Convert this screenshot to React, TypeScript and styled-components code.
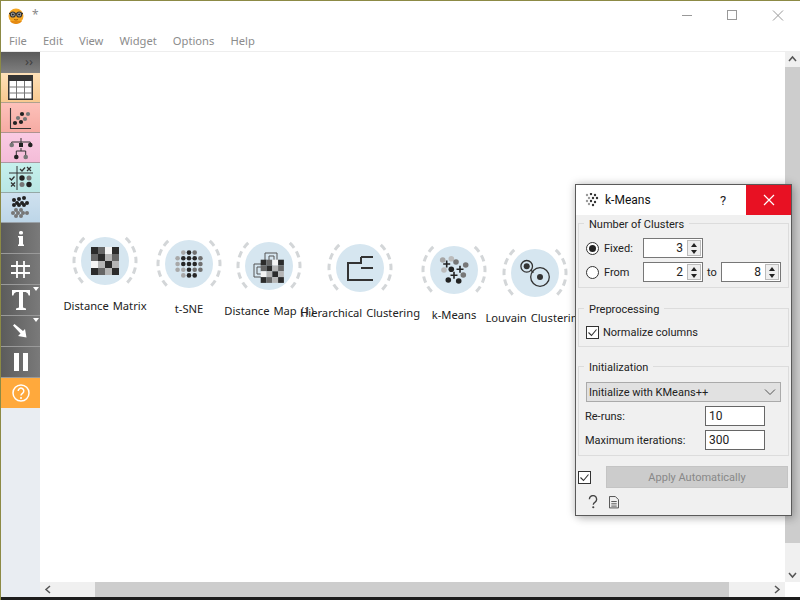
import React from "react";
import styled, { createGlobalStyle } from "styled-components";

const Global = createGlobalStyle`
  html, body { margin: 0; padding: 0; width: 800px; height: 600px; overflow: hidden; background: #fff; }
  * { box-sizing: border-box; }
  body { font-family: "Noto Sans", "Liberation Sans", sans-serif; font-size: 12px; }
`;

const Win = styled.div`
  position: relative; width: 800px; height: 600px; display: flex; flex-direction: column;
  background: #fff; border-top: 1px solid #8c8a45; border-left: 1px solid #8c8a45; overflow: hidden;
`;
const TitleBar = styled.div`
  height: 29px; flex: none; display: flex; align-items: center; padding-left: 7px; position: relative;
`;
const TitleStar = styled.span`
  margin-left: 8px; margin-top: -3px; color: #8a8a8a; font-size: 12px;
`;
const WinControls = styled.div`
  margin-left: auto; display: flex; align-items: center; height: 100%;
`;
const WinBtn = styled.svg`
  width: 45px; height: 29px; display: block; color: #999;
`;
const MenuBar = styled.div`
  height: 22px; flex: none; display: flex; align-items: center; gap: 16px; padding: 0 0 1px 8px;
  color: #8c8c8c; font-size: 11.2px; border-bottom: 1px solid #eeeeee;
`;
const Main = styled.div`
  height: 545px; flex: none; display: flex;
`;
const Dock = styled.div`
  width: 39px; flex: none; display: flex; flex-direction: column; background: #e9edf2;
  box-shadow: 1px 0 1px rgba(0,0,0,.12);
`;
const DockHead = styled.div`
  height: 21px; flex: none; background: linear-gradient(#5a5a5a, #808080); color: #404040;
  font-size: 13px; display: flex; align-items: center; justify-content: flex-end; padding: 0 7px 3px 0; letter-spacing: 0;
`;
const CatTile = styled.div<{ $c: string; $d: string }>`
  height: 30px; flex: none; display: flex; align-items: center; justify-content: center;
  background: linear-gradient(${p => p.$c}, ${p => p.$d}); border-bottom: 1px solid rgba(110,110,110,.55);
`;
const ToolTile = styled.div`
  position: relative; height: 31px; flex: none; display: flex; align-items: center; justify-content: center;
  background: linear-gradient(90deg, #5c5c5c, #7a7a7a); border-bottom: 1px solid #9a9a9a;
`;
const HelpTile = styled.div`
  height: 30px; flex: none; display: flex; align-items: center; justify-content: center; background: #ffa93c;
`;
const Caret = styled.span`
  position: absolute; right: 1px; top: 2px; width: 0; height: 0;
  border-left: 3px solid transparent; border-right: 3px solid transparent; border-top: 4px solid #fff;
`;
const CanvasCol = styled.div`
  flex: 1; min-width: 0; display: flex; flex-direction: column;
`;
const Canvas = styled.div`
  flex: 1; position: relative; background: #fff; overflow: hidden;
`;
const HScroll = styled.div`
  height: 15px; flex: none; display: flex; align-items: center; background: #f0f0f0;
`;
const HThumb = styled.div`
  width: 634px; height: 15px; background: #cdcdcd; margin-left: 39px;
`;
const ArrowBox = styled.svg`
  width: 16px; height: 15px; flex: none; color: #555;
`;
const ArrowPush = styled.div`
  flex: 1;
`;
const VScroll = styled.div`
  width: 15px; flex: none; display: flex; flex-direction: column; background: #f0f0f0;
`;
const VThumb = styled.div`
  height: 476px; background: #cdcdcd;
`;
const VPush = styled.div`
  flex: 1;
`;
const VArrow = styled.svg`
  width: 15px; height: 15px; flex: none; color: #555;
`;
const Corner = styled.div`
  height: 15px; flex: none; background: #fff;
`;
const Desk = styled.div`
  flex: 1; background: #1d1d1d;
`;

const NodeWrap = styled.div<{ $x: number; $y: number }>`
  position: absolute; left: ${p => p.$x - 40 - 100}px; top: ${p => p.$y - 52 - 36}px; width: 200px;
  display: flex; flex-direction: column; align-items: center;
`;
const NodeIcon = styled.svg`
  width: 72px; height: 72px; display: block;
`;
const NodeLabel = styled.div`
  margin-top: 1px; font-size: 11.2px; line-height: 16px; color: #222; white-space: nowrap; word-spacing: 1px;
`;

const Dialog = styled.div`
  position: absolute; left: 574px; top: 183px; width: 217px; height: 332px; background: #f0f0f0;
  border: 1px solid #5a5a5a; box-shadow: 0 0 8px rgba(0,0,0,.25), 4px 4px 8px rgba(0,0,0,.12);
  display: flex; flex-direction: column; color: #222; font-family: Roboto, "Noto Sans", sans-serif; font-size: 11px;
`;
const DlgTitle = styled.div`
  height: 30px; flex: none; background: #fff; display: flex; align-items: center; padding-left: 9px; color: #111;
`;
const DlgName = styled.span`
  margin-left: 6px; font-size: 12px; flex: 1;
`;
const DlgHelp = styled.span`
  width: 26px; font-size: 13px; text-align: left; color: #222;
`;
const DlgClose = styled.div`
  width: 45px; height: 30px; background: #e81123; display: flex; align-items: center; justify-content: center;
`;
const DlgBody = styled.div`
  flex: 1; display: flex; flex-direction: column; padding: 8px 2px 0 2px;
`;
const Group = styled.div<{ $h: number; $mb: number }>`
  position: relative; height: ${p => p.$h}px; margin-bottom: ${p => p.$mb}px; border: 1px solid #dcdcdc;
  padding: 0 7px; display: flex; flex-direction: column;
`;
const GroupTitle = styled.span`
  position: absolute; left: 5px; top: -7px; padding: 0 5px; line-height: 16px; background: #f0f0f0; color: #222;
`;
const Row = styled.div<{ $mt: number }>`
  display: flex; align-items: center; height: 20px; margin-top: ${p => p.$mt}px;
`;
const Radio = styled.span<{ $on?: boolean }>`
  width: 13px; height: 13px; border-radius: 50%; border: 1px solid #333; background: #fff; flex: none;
  display: flex; align-items: center; justify-content: center;
  &::after { content: ""; width: 7px; height: 7px; border-radius: 50%; background: ${p => (p.$on ? "#222" : "transparent")}; }
`;
const RadioLabel = styled.span`
  margin-left: 5px; width: 39px;
`;
const Spin = styled.div`
  width: 60px; height: 20px; border: 1px solid #777; background: #fff; display: flex; align-items: center;
`;
const SpinVal = styled.span`
  flex: 1; text-align: right; padding-right: 4px; font-size: 12px; color: #222;
`;
const SpinBtns = styled.div`
  width: 14px; height: 16px; margin-right: 1px; display: flex; flex-direction: column; border: 1px solid #bbb; background: #eee;
`;
const SpinBtn = styled.span<{ $up?: boolean }>`
  flex: 1; display: flex; align-items: center; justify-content: center;
  &::after { content: ""; border-left: 3px solid transparent; border-right: 3px solid transparent;
    ${p => (p.$up ? "border-bottom: 4px solid #222;" : "border-top: 4px solid #222;")} }
`;
const ToLabel = styled.span`
  width: 18px; text-align: center;
`;
const Check = styled.svg`
  width: 13px; height: 13px; flex: none; display: block;
`;
const CheckLabel = styled.span`
  margin-left: 4px;
`;
const Select = styled.div`
  height: 20px; margin-top: 15px; border: 1px solid #aaa; background: #e1e1e1; display: flex; align-items: center; padding: 0 4px 0 2px;
`;
const SelectText = styled.span`
  flex: 1;
`;
const FormRow = styled.div<{ $mt: number }>`
  height: 20px; margin-top: ${p => p.$mt}px; margin-left: -1px; display: flex; align-items: center;
`;
const FormLabel = styled.span`
  width: 120px;
`;
const TextBox = styled.div`
  width: 60px; height: 20px; border: 1px solid #666; background: #fff; padding-left: 3px; line-height: 18px; font-size: 12px;
`;
const ApplyRow = styled.div`
  display: flex; align-items: center; margin-top: 10px; height: 22px;
`;
const ApplyBtn = styled.div`
  width: 182px; height: 22px; margin-left: 15px; padding-top: 1px; background: #cccccc; color: #888; border: 1px solid #c4c4c4;
  display: flex; align-items: center; justify-content: center;
`;
const FootIcons = styled.div`
  display: flex; align-items: center; gap: 11px; margin: 7px 0 0 10px;
`;
const FootIcon = styled.svg`
  width: 10px; height: 14px; display: block;
`;

const Ring = () => {
  const arc = (sign: number) => {
    const r = 31;
    const a = (48 * Math.PI) / 180;
    const x = 36 + sign * r * Math.cos(a);
    const y1 = 36 - r * Math.sin(a);
    const y2 = 36 + r * Math.sin(a);
    return `M${x} ${y1}A${r} ${r} 0 0 ${sign > 0 ? 1 : 0} ${x} ${y2}`;
  };
  return (
    <>
      <path d={arc(-1)} fill="none" stroke="#d3d6d8" strokeWidth="3" strokeDasharray="6.5 4.3" />
      <path d={arc(1)} fill="none" stroke="#d3d6d8" strokeWidth="3" strokeDasharray="6.5 4.3" />
      <circle cx="36" cy="36" r="24" fill="#d6e6f0" />
    </>
  );
};

const matrix = [
  ["#2b2b2b", "#666666", "#f4f4f4", "#2b2b2b"],
  ["#666666", "#2b2b2b", "#b5b5b5", "#666666"],
  ["#f4f4f4", "#b5b5b5", "#2b2b2b", "#b5b5b5"],
  ["#2b2b2b", "#666666", "#b5b5b5", "#2b2b2b"],
];
const Matrix = ({ x, y, s }: { x: number; y: number; s: number }) => (
  <>
    {matrix.map((r, i) =>
      r.map((c, j) => <rect key={`${i}${j}`} x={x + j * s} y={y + i * s} width={s} height={s} fill={c} />)
    )}
  </>
);

const G = "#a8a8a8";
const M = "#707070";
const D = "#262626";
const tsneGrid = [
  [null, G, D, M, null],
  [G, D, D, D, M],
  [G, D, D, D, M],
  [G, G, D, M, M],
  [null, G, D, D, null],
];
const tsneAxis = [24.6, 30.3, 36, 41.7, 47.4];

const kdots: [number, number, string][] = [
  [24.7, 26, "#a5a5a5"], [33.3, 24.7, "#bbb"], [38, 28, "#777"], [47.7, 31, "#777"], [26, 36, "#bbb"],
  [33.3, 35.3, "#222"], [45.3, 41, "#777"], [30.3, 46, "#222"], [40.7, 47, "#222"],
];
const plus: [number, number][] = [[28.7, 30], [42, 35.3], [36, 41.3]];

const Node = ({ x, y, label, children }: { x: number; y: number; label: string; children?: React.ReactNode }) => (
  <NodeWrap $x={x} $y={y}>
    <NodeIcon viewBox="0 0 72 72">
      <Ring />
      {children}
    </NodeIcon>
    <NodeLabel>{label}</NodeLabel>
  </NodeWrap>
);

const Logo = () => (
  <svg width="16" height="16" viewBox="0 0 16 16">
    <circle cx="8" cy="8" r="7.5" fill="#f5a623" />
    <path d="M2 13a7.5 7.5 0 0 0 12 0z" fill="#e58a12" />
    <path d="M1 5.500h14" stroke="#333" strokeWidth="1.2" />
    <circle cx="4.800" cy="6.500" r="2.500" fill="#aaa" stroke="#333" strokeWidth="1.2" />
    <circle cx="11.200" cy="6.500" r="2.500" fill="#aaa" stroke="#333" strokeWidth="1.2" />
    <circle cx="4.800" cy="6.500" r="1.100" fill="#222" />
    <circle cx="11.200" cy="6.500" r="1.100" fill="#222" />
    <path d="M6 11.500q2 1 4 0" stroke="#a35b00" fill="none" />
  </svg>
);

const CheckBox = () => (
  <Check viewBox="0 0 13 13">
    <rect x=".5" y=".5" width="12" height="12" fill="#fff" stroke="#333" />
    <path d="M2.500 6.500l3 3 5-6" fill="none" stroke="#333" strokeWidth="1.1" />
  </Check>
);

const SpinBox = ({ v }: { v: number }) => (
  <Spin>
    <SpinVal>{v}</SpinVal>
    <SpinBtns>
      <SpinBtn $up />
      <SpinBtn />
    </SpinBtns>
  </Spin>
);

export default function App() {
  return (
    <Win>
      <Global />
      <TitleBar>
        <Logo />
        <TitleStar>*</TitleStar>
        <WinControls>
          <WinBtn viewBox="0 0 45 29">
            <path d="M17 14.500h10" stroke="currentColor" />
          </WinBtn>
          <WinBtn viewBox="0 0 45 29">
            <rect x="17.500" y="9.500" width="9" height="9" fill="none" stroke="currentColor" />
          </WinBtn>
          <WinBtn viewBox="0 0 45 29">
            <path d="M18 9.500l10 10M28 9.500l-10 10" stroke="currentColor" fill="none" />
          </WinBtn>
        </WinControls>
      </TitleBar>
      <MenuBar>
        {["File", "Edit", "View", "Widget", "Options", "Help"].map(m => (
          <span key={m}>{m}</span>
        ))}
      </MenuBar>
      <Main>
        <Dock>
          <DockHead>››</DockHead>
          <CatTile $c="#fde0b8" $d="#f8c990">
            <svg width="25" height="25" viewBox="0 0 25 25">
              <rect x=".75" y=".75" width="23.500" height="23.500" fill="#fff" stroke="#333" strokeWidth="1.500" />
              <rect x="1" y="1" width="23" height="5" fill="#333" />
              <path d="M8.500 6v18M16.500 6v18M1 12h23M1 18h23" stroke="#777" fill="none" />
            </svg>
          </CatTile>
          <CatTile $c="#fdc1ba" $d="#f6aba3">
            <svg width="24" height="26" viewBox="0 0 24 26">
              <path d="M1.500 3v20.500H22" stroke="#333" fill="none" strokeWidth="1.100" />
              <circle cx="6" cy="18" r="2.100" fill="#222" /><circle cx="12" cy="17" r="2.100" fill="#222" />
              <circle cx="9" cy="13" r="2.100" fill="#777" /><circle cx="16" cy="14" r="2.100" fill="#777" />
              <circle cx="13" cy="9" r="2.100" fill="#222" /><circle cx="19" cy="9" r="2.100" fill="#777" />
            </svg>
          </CatTile>
          <CatTile $c="#facbe3" $d="#f4bcd8">
            <svg width="26" height="26" viewBox="0 0 26 26">
              <path d="M13 3v4M3.700 9V7h18.600v2M13 7v3M13 13v3M8.300 20v-4h9.400v4" stroke="#333" fill="none" />
              <circle cx="3.700" cy="10" r="2.300" fill="#777" /><rect x="11" y="8" width="4" height="4" fill="#222" />
              <circle cx="22.300" cy="10" r="2.300" fill="#222" /><circle cx="8.300" cy="22" r="2.300" fill="#222" />
              <circle cx="17.700" cy="22" r="2.300" fill="#777" />
            </svg>
          </CatTile>
          <CatTile $c="#c6f0ec" $d="#b9e7e4">
            <svg width="26" height="26" viewBox="0 0 26 26">
              <path d="M9 1v24M1 8h24" stroke="#333" fill="none" />
              <path d="M12 4l2 2 3-3.500M1.500 13l2 2 3-3.500" stroke="#333" fill="none" strokeWidth="1.300" />
              <path d="M19 2l4 4M23 2l-4 4M3 17.500l4 4M7 17.500l-4 4" stroke="#333" fill="none" strokeWidth="1.300" />
              <circle cx="14" cy="13" r="2.700" fill="#222" /><circle cx="21" cy="13" r="2.500" fill="#777" />
              <circle cx="14" cy="19.500" r="2.500" fill="#777" /><circle cx="21" cy="19.500" r="2.700" fill="#222" />
            </svg>
          </CatTile>
          <CatTile $c="#cfe1ef" $d="#bdd6e8">
            <svg width="24" height="26" viewBox="0 0 24 26">
              {[[5, 5], [10, 4], [15, 3], [8, 8], [13, 8], [18, 8], [5, 10], [10, 10], [15, 10]].map(([x, y]) => (
                <circle key={`${x}-${y}`} cx={x} cy={y} r="2" fill="#222" />
              ))}
              {[[7, 15], [12, 15], [4, 18], [9, 18], [14, 18], [18, 18], [7, 21], [12, 21]].map(([x, y]) => (
                <circle key={`${x}-${y}`} cx={x} cy={y} r="2" fill="#777" />
              ))}
            </svg>
          </CatTile>
          <ToolTile>
            <svg width="6" height="15" viewBox="0 0 6 15"><rect x="1" y="0" width="4" height="3.500" rx="1.500" fill="#fff" /><path d="M0 5h5v8.500h1V15H0v-1.500h1V6.500H0z" fill="#fff" /></svg>
          </ToolTile>
          <ToolTile>
            <svg width="19" height="17" viewBox="0 0 19 17"><path d="M6 0v17M13 0v17M0 5h19M0 12h19" stroke="#fff" strokeWidth="1.800" /></svg>
          </ToolTile>
          <ToolTile>
            <svg width="18" height="20" viewBox="0 0 18 20"><path d="M0 0h18v5.500h-1.300q-.5-3-3-3.500H11v15.500l3 1V20H4v-1.500l3-1V2H4.300q-2.500.5-3 3.500H0z" fill="#fff" /></svg>
            <Caret />
          </ToolTile>
          <ToolTile>
            <svg width="15" height="15" viewBox="0 0 15 15"><path d="M0 1.500L1.500 0 10 7l2-2 1.500 8.500L5 12l2.500-2.500z" fill="#fff" /></svg>
            <Caret />
          </ToolTile>
          <ToolTile>
            <svg width="14" height="18" viewBox="0 0 14 18"><path d="M0 0h5v18H0zM9 0h5v18H9z" fill="#fff" /></svg>
          </ToolTile>
          <HelpTile>
            <svg width="18" height="18" viewBox="0 0 18 18">
              <circle cx="9" cy="9" r="8" fill="none" stroke="#fff" strokeWidth="1.500" />
              <path d="M6.200 7a2.800 2.800 0 1 1 4.300 2.300c-1 .7-1.500 1.200-1.500 2.200" fill="none" stroke="#fff" strokeWidth="1.500" />
              <circle cx="9" cy="14" r="1" fill="#fff" />
            </svg>
          </HelpTile>
        </Dock>
        <CanvasCol>
          <Canvas>
            <Node x={105} y={261} label="Distance Matrix">
              <Matrix x={22} y={22} s={7} />
            </Node>
            <Node x={189} y={264} label="t-SNE">
              {tsneGrid.map((r, i) =>
                r.map((c, j) =>
                  c ? <circle key={`${i}-${j}`} cx={tsneAxis[j]} cy={tsneAxis[i]} r="2.300" fill={c} /> : null
                )
              )}
            </Node>
            <Node x={269} y={266} label="Distance Map (1)">
              <path d="M32 30V23H44V30M36 30V26H41V30M28 34H21V47H28M28 37H24V44H28" fill="none" stroke="#555" />
              <Matrix x={27.700} y={29.700} s={5.800} />
            </Node>
            <Node x={360} y={268} label="Hierarchical Clustering">
              <path d="M37 25H49M37 25V31H24V48H49M37 36H49" fill="none" stroke="#333" strokeWidth="2" />
            </Node>
            <Node x={454} y={270} label="k-Means">
              {kdots.map(([x, y, c], i) => (
                <circle key={i} cx={x} cy={y} r="2.800" fill={c} />
              ))}
              {plus.map(([x, y], i) => (
                <path key={i} d={`M${x - 3.500} ${y}h7M${x} ${y - 3.500}v7`} stroke="#222" strokeWidth="1.600" />
              ))}
            </Node>
            <Node x={535} y={273} label="Louvain Clustering">
              <circle cx="27.700" cy="29.300" r="5.800" fill="none" stroke="#333" strokeWidth="1.300" />
              <circle cx="27.700" cy="29.300" r="3" fill="#333" />
              <circle cx="41" cy="40" r="9.300" fill="none" stroke="#333" strokeWidth="1.300" />
              <circle cx="41" cy="40" r="3" fill="#333" />
              <path d="M31.500 33l3 2.500" stroke="#333" strokeWidth="1.300" />
            </Node>
          </Canvas>
          <HScroll>
            <ArrowBox viewBox="0 0 16 15"><path d="M10 4l-4 3.500 4 3.500" fill="none" stroke="currentColor" strokeWidth="1.500" /></ArrowBox>
            <HThumb />
            <ArrowPush />
            <ArrowBox viewBox="0 0 16 15"><path d="M6 4l4 3.500-4 3.500" fill="none" stroke="currentColor" strokeWidth="1.500" /></ArrowBox>
          </HScroll>
        </CanvasCol>
        <VScroll>
          <VArrow viewBox="0 0 15 15"><path d="M4 9l3.500-4L11 9" fill="none" stroke="currentColor" strokeWidth="1.500" /></VArrow>
          <VThumb />
          <VPush />
          <VArrow viewBox="0 0 15 15"><path d="M4 6l3.500 4L11 6" fill="none" stroke="currentColor" strokeWidth="1.500" /></VArrow>
          <Corner />
        </VScroll>
      </Main>
      <Desk />
      <Dialog>
        <DlgTitle>
          <svg width="14" height="14" viewBox="0 0 14 14">
            {[[2, 2], [6, 1], [10, 2], [4, 5], [8, 5], [12, 5], [2, 8], [6, 8], [10, 9], [4, 11], [8, 12]].map(([x, y], i) => (
              <circle key={i} cx={x} cy={y} r="1.200" fill={i % 3 === 0 ? "#999" : "#333"} />
            ))}
          </svg>
          <DlgName>k-Means</DlgName>
          <DlgHelp>?</DlgHelp>
          <DlgClose>
            <svg width="12" height="12" viewBox="0 0 12 12"><path d="M1 1l10 10M11 1L1 11" stroke="#fff" strokeWidth="1.200" /></svg>
          </DlgClose>
        </DlgTitle>
        <DlgBody>
          <Group $h={65} $mb={20}>
            <GroupTitle>Number of Clusters</GroupTitle>
            <Row $mt={14}>
              <Radio $on />
              <RadioLabel>Fixed:</RadioLabel>
              <SpinBox v={3} />
            </Row>
            <Row $mt={4}>
              <Radio />
              <RadioLabel>From</RadioLabel>
              <SpinBox v={2} />
              <ToLabel>to</ToLabel>
              <SpinBox v={8} />
            </Row>
          </Group>
          <Group $h={39} $mb={19}>
            <GroupTitle>Preprocessing</GroupTitle>
            <Row $mt={13}>
              <CheckBox />
              <CheckLabel>Normalize columns</CheckLabel>
            </Row>
          </Group>
          <Group $h={90} $mb={0}>
            <GroupTitle>Initialization</GroupTitle>
            <Select>
              <SelectText>Initialize with KMeans++</SelectText>
              <svg width="12" height="8" viewBox="0 0 12 8"><path d="M1 1.500l5 5 5-5" fill="none" stroke="#555" /></svg>
            </Select>
            <FormRow $mt={4}>
              <FormLabel>Re-runs:</FormLabel>
              <TextBox>10</TextBox>
            </FormRow>
            <FormRow $mt={4}>
              <FormLabel>Maximum iterations:</FormLabel>
              <TextBox>300</TextBox>
            </FormRow>
          </Group>
          <ApplyRow>
            <CheckBox />
            <ApplyBtn>Apply Automatically</ApplyBtn>
          </ApplyRow>
          <FootIcons>
            <FootIcon viewBox="0 0 11 15">
              <path d="M1.500 4.500a4 4 0 1 1 6.300 3.200C6.500 8.500 5.800 9.300 5.800 10.500" fill="none" stroke="#444" strokeWidth="1.500" />
              <circle cx="5.800" cy="13.300" r="1.200" fill="#444" />
            </FootIcon>
            <FootIcon viewBox="0 0 11 15">
              <path d="M.5 1.500h6.500l3.500 3.500v9H.5zM2.500 7h6M2.500 9.500h6M2.500 12h6" fill="none" stroke="#444" />
            </FootIcon>
          </FootIcons>
        </DlgBody>
      </Dialog>
    </Win>
  );
}
